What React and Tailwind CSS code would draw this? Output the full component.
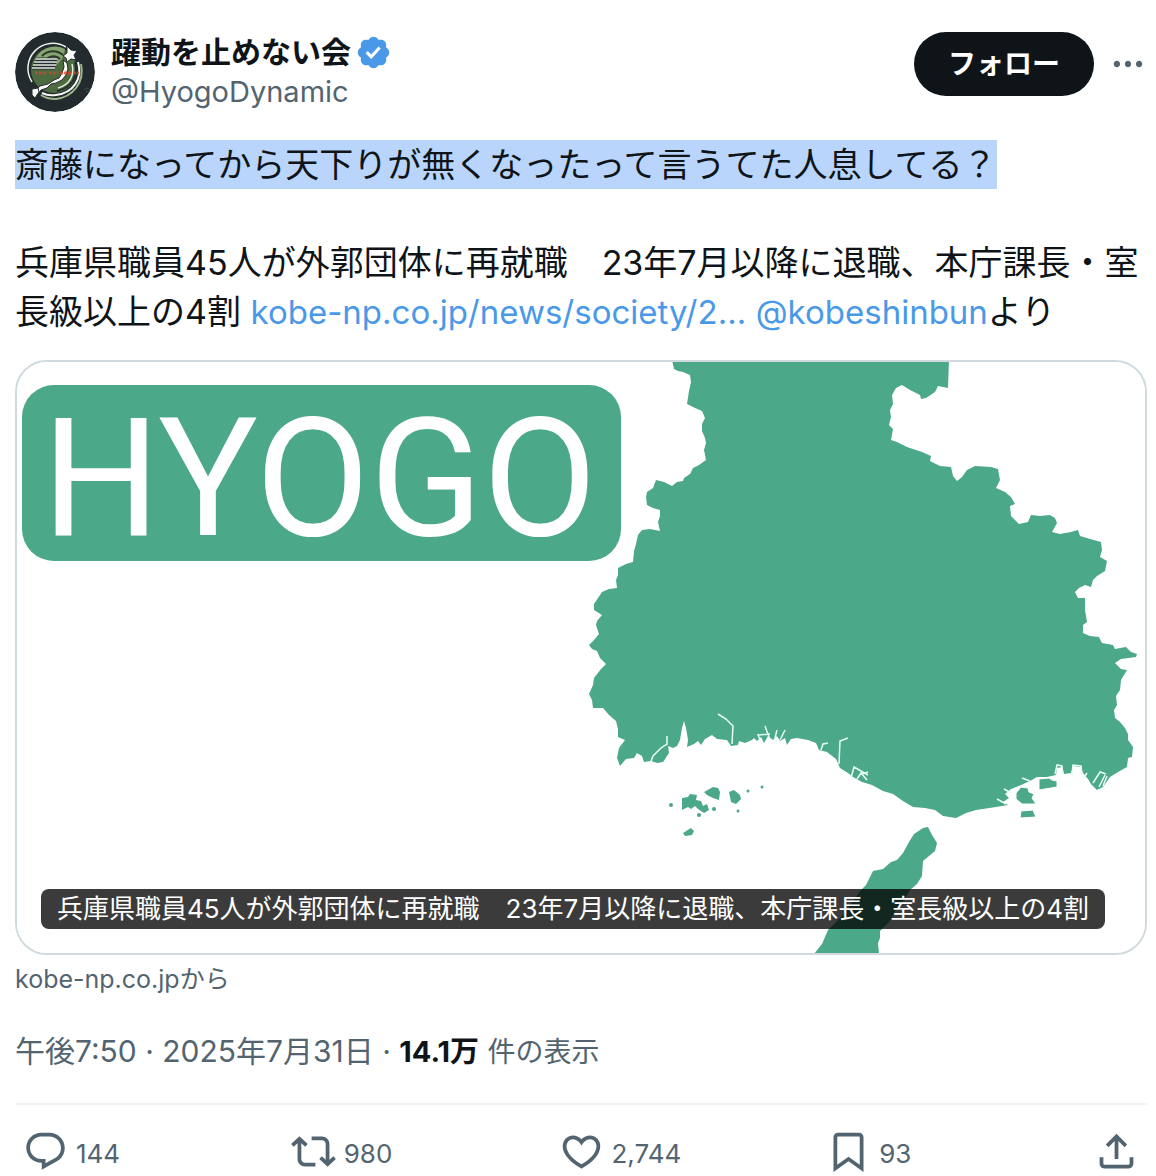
import React from 'react';

const ICONS = {
  reply:
    'M1.751 10c0-4.42 3.584-8 8.005-8h4.366c4.49 0 8.129 3.64 8.129 8.13 0 2.96-1.607 5.68-4.196 7.11l-8.054 4.46v-3.69h-.067c-4.49.1-8.183-3.51-8.183-8.01zm8.005-6c-3.317 0-6.005 2.69-6.005 6 0 3.37 2.77 6.08 6.138 6.01l.351-.01h1.761v2.3l5.087-2.81c1.951-1.08 3.163-3.13 3.163-5.36 0-3.39-2.744-6.13-6.129-6.13H9.756z',
  repost:
    'M4.5 3.88l4.432 4.14-1.364 1.46L5.5 7.55V16c0 1.1.896 2 2 2H13v2H7.5c-2.209 0-4-1.79-4-4V7.55L1.432 9.48.068 8.02 4.5 3.88zM16.5 6H11V4h5.5c2.209 0 4 1.79 4 4v8.45l2.068-1.93 1.364 1.46-4.432 4.14-4.432-4.14 1.364-1.46 2.068 1.93V8c0-1.1-.896-2-2-2z',
  like:
    'M16.697 5.5c-1.222-.06-2.679.51-3.89 2.16l-.805 1.09-.806-1.09C9.984 6.01 8.526 5.44 7.304 5.5c-1.243.07-2.349.78-2.91 1.91-.552 1.12-.633 2.78.479 4.82 1.074 1.97 3.257 4.27 7.129 6.61 3.87-2.34 6.052-4.64 7.126-6.61 1.111-2.04 1.03-3.7.477-4.82-.561-1.13-1.666-1.84-2.908-1.91zm4.187 7.69c-1.351 2.48-4.001 5.12-8.379 7.67l-.503.3-.504-.3c-4.379-2.55-7.029-5.19-8.382-7.67-1.36-2.5-1.41-4.86-.514-6.67.887-1.79 2.647-2.91 4.601-3.01 1.651-.09 3.368.56 4.798 2.01 1.429-1.45 3.146-2.1 4.796-2.01 1.954.1 3.714 1.22 4.601 3.01.896 1.81.846 4.17-.514 6.67z',
  bookmark:
    'M4 4.5C4 3.12 5.119 2 6.5 2h11C18.881 2 20 3.12 20 4.5v18.44l-8-5.71-8 5.71V4.5zM6.5 4c-.276 0-.5.22-.5.5v14.56l6-4.29 6 4.29V4.5c0-.28-.224-.5-.5-.5h-11z',
  share:
    'M12 2.59l5.7 5.7-1.41 1.42L13 6.41V16h-2V6.41l-3.3 3.3-1.41-1.42L12 2.59zM21 15l-.02 3.51c0 1.38-1.12 2.49-2.5 2.49H5.5C4.11 21 3 19.88 3 18.5V15h2v3.5c0 .28.22.5.5.5h12.98c.28 0 .5-.22.5-.5L19 15h2z',
  more:
    'M3 12c0-1.1.9-2 2-2s2 .9 2 2-.9 2-2 2-2-.9-2-2zm9 2c1.1 0 2-.9 2-2s-.9-2-2-2-2 .9-2 2 .9 2 2 2zm7 0c1.1 0 2-.9 2-2s-.9-2-2-2-2 .9-2 2 .9 2 2 2z',
};

const actions = [
  { icon: 'reply', label: '返信', count: '144' },
  { icon: 'repost', label: 'リポスト', count: '980' },
  { icon: 'like', label: 'いいね', count: '2,744' },
  { icon: 'bookmark', label: 'ブックマーク', count: '93' },
];

const HEADLINE = '兵庫県職員45人が外郭団体に再就職　23年7月以降に退職、本庁課長・室長級以上の4割';

function Icon({ name, className }) {
  return (
    <svg viewBox="0 0 24 24" className={className} fill="currentColor" aria-hidden="true">
      <path d={ICONS[name]} />
    </svg>
  );
}

function VerifiedBadge() {
  return (
    <svg viewBox="0 0 22 22" className="w-[37px] h-[37px] shrink-0 text-[#4a99e9]" fill="currentColor" role="img" aria-label="認証済みアカウント">
      <path d="M20.396 11c-.018-.646-.215-1.275-.57-1.816-.354-.54-.852-.972-1.438-1.246.223-.607.27-1.264.14-1.897-.131-.634-.437-1.218-.882-1.687-.47-.445-1.053-.75-1.687-.882-.633-.13-1.29-.083-1.897.14-.273-.587-.704-1.086-1.245-1.44S11.647 1.62 11 1.604c-.646.017-1.273.213-1.813.568s-.969.854-1.24 1.44c-.608-.223-1.267-.272-1.902-.14-.635.13-1.22.436-1.69.882-.445.47-.749 1.055-.878 1.688-.13.633-.08 1.29.144 1.896-.587.274-1.087.705-1.443 1.245-.356.54-.555 1.17-.574 1.817.02.647.218 1.276.574 1.817.356.54.856.972 1.443 1.245-.224.606-.274 1.263-.144 1.896.13.634.433 1.218.877 1.688.47.443 1.054.747 1.687.878.633.132 1.29.084 1.897-.136.274.586.705 1.084 1.246 1.439.54.354 1.17.551 1.816.569.647-.016 1.276-.213 1.817-.567s.972-.854 1.245-1.44c.604.239 1.266.296 1.903.164.636-.132 1.22-.447 1.68-.907.46-.46.776-1.044.908-1.681s.075-1.299-.165-1.903c.586-.274 1.084-.705 1.439-1.246.354-.54.551-1.17.569-1.816zM9.662 14.85l-3.429-3.428 1.293-1.302 2.072 2.072 4.4-4.794 1.347 1.246z" />
    </svg>
  );
}

function Avatar() {
  return (
    <svg viewBox="0 0 80 80" className="w-20 h-20 shrink-0 rounded-full" aria-hidden="true">
      <circle cx="40" cy="40" r="40" fill="#232b2f" />
      {/* Green disc */}
      <circle cx="39" cy="38" r="23" fill="#4c6b3f" />
      <path d="M19 30a22 22 0 0 1 31-13l-3 10-7 8H19z" fill="#86a570" />
      <g fill="none" stroke="#2b3a2c" strokeWidth="2">
        <path d="M27 24a15 15 0 0 1 21-1M32 27a9 9 0 0 1 13 0" />
      </g>
      {/* Rings */}
      <path d="M17 50a25 25 0 0 1 34-35" fill="none" stroke="#eef2ea" strokeWidth="1.5" />
      <path d="M66 32c4 18-8 33-25 35-6 0-11-1-15-4" fill="none" stroke="#9db58a" strokeWidth="2" />
      <path d="M63 30c5 17-5 31-22 33-6 1-10 0-14-2" fill="none" stroke="#f5f7f3" strokeWidth="2" />
      <path d="M60 30c4 15-4 26-18 29" fill="none" stroke="#232b2f" strokeWidth="2" />
      <path d="M57 32c3 12-3 21-14 24" fill="none" stroke="#e3eadc" strokeWidth="1.5" />
      {/* Speed lines */}
      <path d="M21 27h21M19 30h23M18 33h23M17 36h23" stroke="#232b2f" strokeWidth="3" />
      <path d="M21 27h21M19 30h23M18 33h23M17 36h23" stroke="#e4e9df" strokeWidth="1.5" />
      {/* Japan silhouette */}
      <g fill="#fbfcfa" stroke="#232b2f" strokeWidth="1">
        <path d="M52 14l4 4 6 1-3 4 2 5-5-1-4 3-1-4-3-2 4-3z" />
        <path d="M48 28l4 3 1 6-2 6-4 5-6 3-5 1-4 4-6 2-3 4-2-4 4-4 8-2 6-4 5-2 3-5 2-6z" />
        <path d="M17 57l6-1 1 4-4 6-3-3z" />
      </g>
      <path d="M20 41h12M34 41h9M45 41h11M58 41h6" stroke="#d9432f" strokeWidth="3" strokeDasharray="3 1" opacity="0.75" />
      <path d="M69 58q3-4 6 0M71 60q2-2 4 0" fill="none" stroke="#3d5149" strokeWidth="1" />
    </svg>
  );
}

/* News thumbnail: prefecture map with its name plate */
function HyogoMap() {
  return (
    <svg viewBox="17 362 1128 591" className="block w-full h-auto" role="img" aria-label="兵庫県の地図">
      <rect x="17" y="362" width="1128" height="591" fill="#fff" />
      <g fill="#4ba888">
        <rect x="22" y="385" width="599" height="176" rx="32" />
        <path d="M672 360L674 369L678 371L683 372L690 375L691 382L689 391L687 404L695 408L702 411L705 418L702 424L702 431L705 438L706 443L704 450L706 460L699 465L693 468L690 474L684 478L683 481L677 482L672 486L664 482L656 480L653 488L647 492L646 497L647 505L653 508L660 510L660 516L658 522L660 531L650 529L642 530L638 535L636 544L634 551L633 562L626 564L618 568L618 575L616 580L617 588L609 589L602 592L598 598L594 604L594 610L602 615L597 621L596 625L599 634L594 640L589 645L592 649L597 651L600 658L606 664L601 669L594 678L593 685L589 694L592 700L593 708L603 708L609 715L616 721L618 729L618 737L625 740L619 748L617 758L620 766L626 759L634 758L637 753L642 756L644 762L651 761L657 763L663 762L669 753L668 746L673 748L677 746L680 740L682 728L684 721L686 728L688 740L687 747L694 744L698 741L701 745L705 739L712 735L717 739L727 740L731 746L738 745L739 741L745 743L752 740L754 738L757 741L761 737L764 743L768 736L773 740L777 736L780 741L785 738L787 745L791 739L797 738L808 740L816 743L819 750L827 752L836 759L840 768L848 773L853 777L862 782L872 785L883 791L893 794L903 801L913 807L925 808L935 810L943 816L956 818L966 813L976 810L996 807L1008 805L1003 802L1009 798L1005 794L1011 789L1021 785L1030 781L1037 777L1047 777L1056 775L1057 768L1062 767L1064 774L1071 773L1073 766L1081 767L1083 773L1088 779L1091 784L1097 790L1103 787L1110 777L1118 772L1127 767L1128 758L1132 757L1133 747L1128 740L1128 734L1125 728L1120 722L1115 718L1114 710L1117 705L1116 696L1120 690L1121 680L1127 670L1121 669L1115 663L1121 659L1136 657L1137 654L1131 652L1126 647L1115 649L1113 645L1102 643L1099 637L1090 636L1083 633L1083 625L1087 622L1085 610L1085 598L1078 598L1075 592L1079 588L1085 585L1091 587L1093 580L1097 576L1105 571L1107 561L1100 557L1102 550L1101 542L1090 539L1080 536L1078 530L1071 532L1060 534L1052 532L1057 523L1055 518L1050 515L1040 516L1031 515L1028 522L1019 524L1011 516L1010 506L1015 504L1011 497L1005 492L996 488L1000 480L998 469L991 467L975 466L967 470L962 477L957 481L953 476L951 467L940 466L930 461L931 456L922 452L907 447L897 442L891 440L893 429L889 425L891 417L890 410L893 404L892 395L896 388L902 385L910 390L920 395L921 399L926 398L935 392L938 386L948 388L949 360Z" />
        {/* Awaji island */}
        <path d="M923 828L928 827L932 835L937 843L935 851L923 861L922 876L917 884L910 890L904 900L896 910L889 922L880 931L880 938L878 943L879 954L814 954L822 944L828 930L843 915L861 890L866 885L873 871L883 869L891 862L897 860L903 853L909 842L914 834Z" />
        {/* Ieshima islands */}
        <path d="M682 798l6-1 2-3 7 1-1 5 5 1 2 5 4-2 2 6-5 3-6-4-3-3-4 3-3-2-6 3z" />
        <path d="M704 792l9-5 5 1 2 4-1 8-6-2-6-3zM729 792l5-2 6 5 1 4-5 5-5-2-1-5z" />
        <circle cx="671" cy="805" r="2" />
        <circle cx="699" cy="815" r="2" />
        <circle cx="714" cy="809" r="2" />
        <circle cx="748" cy="791" r="1.5" />
        <circle cx="762" cy="787" r="1.5" />
        <circle cx="738" cy="811" r="1.5" />
        <path d="M683 833l8-5 3 3-2 4-7 1z" />
      </g>
      {/* Rivers and harbour channels */}
      <g fill="none" stroke="#e6fff6" strokeWidth="1.5">
        <path d="M650 764l3-8 8-8 6-4v-8M732 744l1-18-7-7-8-5M839 764l1-23 8-3M762 744l-4-9 12-1M770 740l-5-14M774 742l3-12M780 740l5-10M821 750l2-6 5-1" />
        <path d="M851 778l3-11 14 8M857 779l4-6 6 7M862 774l6-2M1006 804l-9-5M1013 794l-9-5M1021 786l5 5M1030 781l-8-3M1055 774l2-9 5 1 1 9M1072 775l1-10 8 1 1 9M1083 779l4-6M1093 783l7-11 6 2M1099 787l6-12M1107 776l-4 10" />
      </g>
      {/* Harbour islands */}
      <g fill="#4ba888" stroke="#fff" strokeWidth="1">
        <path d="M1016 793l5-6 7 1 1 4 5 2-2 4 4 6h-14l-6-5zM1021 811l12-1 3 7-16 1zM1039 779l10-1 3 2 5 1v6l-18 3z" />
      </g>
      <text x="42" y="535" fill="#fff" className="font-['Roboto',sans-serif] text-[166px] font-normal">
        HYOGO
      </text>
    </svg>
  );
}

function App() {
  return (
    <article
      lang="ja"
      className="bg-white pl-[15px] pr-[9px] pt-8 text-[#0f1419] font-['Inter','Noto_Sans_CJK_JP',sans-serif]"
    >
      {/* Author */}
      <header className="flex items-start">
        <Avatar />
        <div className="ml-4 min-w-0 flex-1">
          <div className="flex h-10 items-center gap-1">
            <h1 className="text-[30px] leading-10 font-bold">躍動を止めない会</h1>
            <VerifiedBadge />
          </div>
          <p className="text-[29px] leading-10 text-[#536471]">@HyogoDynamic</p>
        </div>
        <button type="button" className="h-16 shrink-0 rounded-full bg-[#0f1419] px-[34px] text-[28px] font-bold text-white">
          フォロー
        </button>
        <button type="button" aria-label="もっと見る" className="ml-[15px] flex h-16 shrink-0 items-center text-[#536471]">
          <Icon name="more" className="w-[38px] h-[38px]" />
        </button>
      </header>

      {/* Post text */}
      <div className="mt-7 text-[34px] leading-[49px]">
        <p>
          <mark className="inline-block bg-[#b9d5fb] text-inherit">斎藤になってから天下りが無くなったって言うてた人息してる？</mark>
        </p>
        <p className="mt-[49px]">
          {HEADLINE}{' '}
          <a href="#article" className="text-[33px] leading-none text-[#4a99e9]">kobe-np.co.jp/news/society/2…</a>{' '}
          <a href="#kobeshinbun" className="text-[33px] leading-none text-[#4a99e9]">@kobeshinbun</a>より
        </p>
      </div>

      {/* Link card */}
      <a href="#article" className="relative mt-6 block overflow-hidden rounded-[32px] border-2 border-[#cfd9de]">
        <HyogoMap />
        <span className="absolute bottom-6 left-6 rounded-lg bg-black/77 px-4 text-[26px] leading-10 text-white">
          {HEADLINE}
        </span>
      </a>
      <a href="#article" className="mt-2 block text-[25px] leading-8 text-[#536471]">kobe-np.co.jpから</a>

      <p className="mt-9 text-[30px] leading-10 text-[#536471]">
        <time dateTime="2025-07-31T19:50">午後7:50 · 2025年7月31日</time> ·{' '}
        <strong className="text-[29px] leading-none font-bold text-[#0f1419]">14.1万</strong>{' '}
        <span className="text-[28px] leading-none">件の表示</span>
      </p>

      {/* Actions */}
      <div className="mt-8 flex items-center border-t-2 border-[#eff3f4] px-2 pt-6 text-[26px] text-[#536471]">
        {actions.map((action) => (
          <div key={action.icon} className="flex-1">
            <button type="button" aria-label={action.label} className="flex items-center gap-2">
              <Icon name={action.icon} className="w-[45px] h-[45px]" />
              <span className="pt-1 leading-8">{action.count}</span>
            </button>
          </div>
        ))}
        <button type="button" aria-label="共有">
          <Icon name="share" className="w-[45px] h-[45px]" />
        </button>
      </div>
    </article>
  );
}

export default App;
